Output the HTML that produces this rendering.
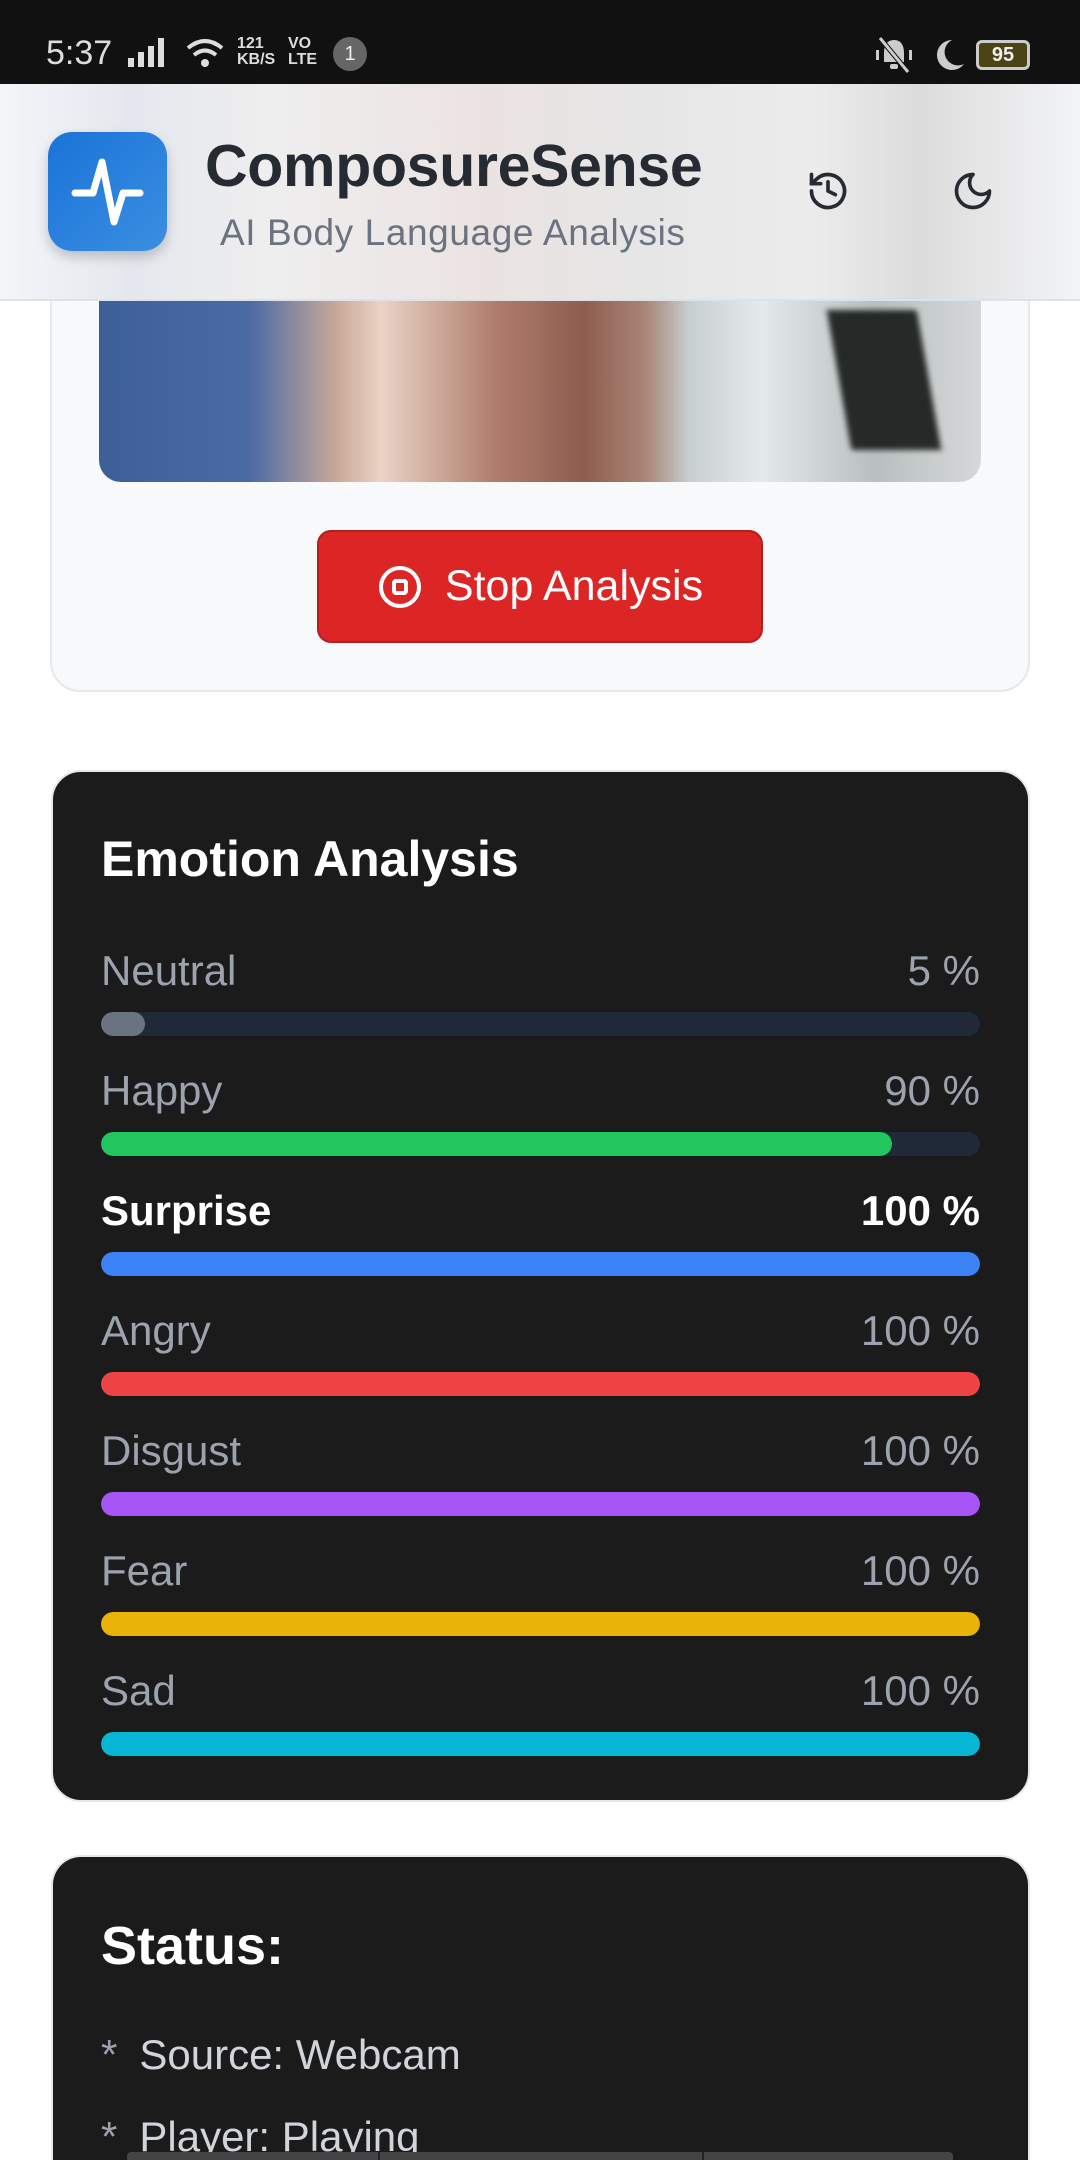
<!DOCTYPE html>
<html style="overflow:hidden;height:2160px"><head><meta charset="utf-8"><style>
*{box-sizing:border-box;margin:0;padding:0}
body{width:1080px;height:2160px;overflow:hidden;background:#fff;font-family:"Liberation Sans",sans-serif;position:relative}
.sb{position:absolute;left:0;top:0;width:1080px;height:84px;background:#111;color:#ddd}
.hdr{position:absolute;left:0;top:84px;width:1080px;height:217px;background:linear-gradient(90deg,#f3f5f8 0%,#e4e8ee 12%,#efeeee 25%,#ebe3e2 45%,#e6e6e6 60%,#ececec 75%,#dcdcdc 85%,#f3f4f6 100%);border-bottom:2px solid #dde3ea;z-index:5}
.card1{position:absolute;left:50px;top:200px;width:980px;height:492px;background:#f8f9fb;border:2px solid #e5e7eb;border-radius:30px}
.vid{position:absolute;left:99px;top:290px;width:882px;height:192px;border-radius:0 0 22px 22px;overflow:hidden;background:linear-gradient(90deg,#3d5f98 0%,#4a6aa3 17%,#c9a999 27%,#e9d3c5 32%,#b07d6c 45%,#8e5d4f 55%,#a98677 62%,#c8cfd0 67%,#e4eaea 75%,#b9bfbf 88%,#d5d8d8 100%)}
.btn{position:absolute;left:317px;top:530px;width:446px;height:113px;background:#dc2626;border:2px solid #b91c1c;border-radius:14px;color:#fff;font-size:43px;display:flex;align-items:center;justify-content:center;gap:22px}
.card{position:absolute;left:51px;width:979px;background:#1b1b1b;border:2px solid #e5e7eb;border-radius:30px;overflow:hidden}
.row{position:absolute;left:48px;right:48px;height:40px;font-size:42px;color:#9ca3af}
.row .l{position:absolute;left:0;top:0}.row .r{position:absolute;right:0;top:0}
.bar{position:absolute;left:48px;right:48px;height:24px;border-radius:12px;background:#1f2937;overflow:hidden}
.bar div{height:100%;border-radius:12px}
</style></head><body>
<div class="sb">
<span style="position:absolute;left:46px;top:34px;font-size:34px;color:#ddd">5:37</span>
<svg style="position:absolute;left:128px;top:38px" width="44" height="30"><rect x="0" y="20" width="6" height="9" fill="#ddd"/><rect x="10" y="14" width="6" height="15" fill="#ddd"/><rect x="20" y="8" width="6" height="21" fill="#ddd"/><rect x="30" y="0" width="6" height="29" fill="#ddd"/></svg>
<svg style="position:absolute;left:186px;top:38px" width="40" height="32"><path d="M2 10 Q19 -4 36 10" stroke="#ddd" stroke-width="4" fill="none"/><path d="M8 17 Q19 8 30 17" stroke="#ddd" stroke-width="4" fill="none"/><circle cx="19" cy="25" r="4" fill="#ddd"/></svg>
<span style="position:absolute;left:237px;top:36px;font-size:16px;line-height:16px;font-weight:bold">121<br>KB/S</span>
<span style="position:absolute;left:288px;top:36px;font-size:16px;line-height:16px;font-weight:bold">VO<br>LTE</span>
<span style="position:absolute;left:333px;top:37px;width:34px;height:34px;border-radius:17px;background:#666;color:#eee;font-size:20px;text-align:center;line-height:34px">1</span>
<svg style="position:absolute;left:874px;top:36px" width="40" height="38" viewBox="0 0 40 38" fill="#ccc"><path d="M20 4 C12 4 10 11 10 17 V26 H30 V17 C30 11 28 4 20 4Z"/><rect x="16" y="28" width="8" height="5" rx="2"/><rect x="2" y="14" width="3" height="10"/><rect x="35" y="14" width="3" height="10"/><path d="M6 2 L34 36" stroke="#111" stroke-width="5"/><path d="M6 2 L34 36" stroke="#ccc" stroke-width="3"/></svg>
<svg style="position:absolute;left:932px;top:38px" width="34" height="34"><path d="M20 2 A15 15 0 1 0 32 26 A13 13 0 0 1 20 2Z" fill="#ccc"/></svg>
<div style="position:absolute;left:976px;top:40px;width:54px;height:30px;border:3px solid #ccc;border-radius:6px;background:#4a4416;color:#eee;font-size:20px;font-weight:bold;text-align:center;line-height:24px">95</div>
</div>
<div class="hdr">
<div style="position:absolute;left:48px;top:48px;width:119px;height:119px;border-radius:24px;background:linear-gradient(135deg,#1a73d9,#3b8fe0);box-shadow:0 6px 12px rgba(0,0,0,.2)"><svg width="119" height="119" viewBox="0 0 119 119"><path d="M27 61 H45 L54 30 L66 90 L75 61 H92" stroke="#fff" stroke-width="7" fill="none" stroke-linecap="round" stroke-linejoin="round"/></svg></div>
<div style="position:absolute;left:205px;top:48px;font-size:59px;font-weight:bold;color:#262b33;letter-spacing:-0.3px">ComposureSense</div>
<div style="position:absolute;left:220px;top:128px;font-size:37px;color:#6b7280;letter-spacing:0.6px">AI Body Language Analysis</div>
<svg style="position:absolute;left:806px;top:85px" width="44" height="44" viewBox="0 0 24 24" fill="none" stroke="#262b33" stroke-width="2" stroke-linecap="round"><path d="M3 12a9 9 0 1 0 3-6.7L3 8"/><path d="M3 3v5h5"/><path d="M12 7v5l4 2"/></svg>
<svg style="position:absolute;left:951px;top:85px" width="44" height="44" viewBox="0 0 24 24" fill="none" stroke="#262b33" stroke-width="2" stroke-linejoin="round"><path d="M12 3a6 6 0 0 0 9 9 9 9 0 1 1-9-9Z"/></svg>
</div>
<div class="card1"></div>
<div class="vid"><div style="position:absolute;left:740px;top:20px;width:90px;height:140px;background:#252a28;transform:skewX(10deg);filter:blur(3px)"></div></div>
<div class="btn"><svg width="46" height="46" viewBox="0 0 46 46"><circle cx="23" cy="23" r="19" stroke="#fff" stroke-width="4" fill="none"/><rect x="17" y="17" width="12" height="12" rx="2" stroke="#fff" stroke-width="4" fill="none"/></svg><span>Stop Analysis</span></div>

<div class="card" style="top:770px;height:1032px">
<div style="position:absolute;left:48px;top:58px;font-size:50px;font-weight:bold;color:#fff">Emotion Analysis</div>
<div class="row" style="top:175px"><span class="l">Neutral</span><span class="r">5 %</span></div>
<div class="bar" style="top:240px"><div style="width:5%;background:#6b7280"></div></div>
<div class="row" style="top:295px"><span class="l">Happy</span><span class="r">90 %</span></div>
<div class="bar" style="top:360px"><div style="width:90%;background:#22c55e"></div></div>
<div class="row" style="top:415px;color:#fff;font-weight:bold"><span class="l">Surprise</span><span class="r">100 %</span></div>
<div class="bar" style="top:480px"><div style="width:100%;background:#3b82f6"></div></div>
<div class="row" style="top:535px"><span class="l">Angry</span><span class="r">100 %</span></div>
<div class="bar" style="top:600px"><div style="width:100%;background:#ef4444"></div></div>
<div class="row" style="top:655px"><span class="l">Disgust</span><span class="r">100 %</span></div>
<div class="bar" style="top:720px"><div style="width:100%;background:#a855f7"></div></div>
<div class="row" style="top:775px"><span class="l">Fear</span><span class="r">100 %</span></div>
<div class="bar" style="top:840px"><div style="width:100%;background:#eab308"></div></div>
<div class="row" style="top:895px"><span class="l">Sad</span><span class="r">100 %</span></div>
<div class="bar" style="top:960px"><div style="width:100%;background:#06b6d4"></div></div>
</div>

<div class="card" style="top:1855px;height:305px;border-bottom:none;border-radius:30px 30px 0 0">
<div style="position:absolute;left:48px;top:58px;font-size:54px;font-weight:bold;color:#fff">Status:</div>
<div style="position:absolute;left:48px;top:174px;font-size:42px;color:#d1d5db"><span style="color:#9ca3af;margin-right:22px">*</span>Source: Webcam</div>
<div style="position:absolute;left:48px;top:256px;font-size:42px;color:#d1d5db"><span style="color:#9ca3af;margin-right:22px">*</span>Player: Playing</div>
</div>
<div style="position:absolute;left:127px;top:2152px;width:826px;height:8px;background:#444;border-radius:4px 4px 0 0"></div>
<div style="position:absolute;left:378px;top:2152px;width:2px;height:8px;background:#222"></div>
<div style="position:absolute;left:702px;top:2152px;width:2px;height:8px;background:#222"></div>
</body></html>
